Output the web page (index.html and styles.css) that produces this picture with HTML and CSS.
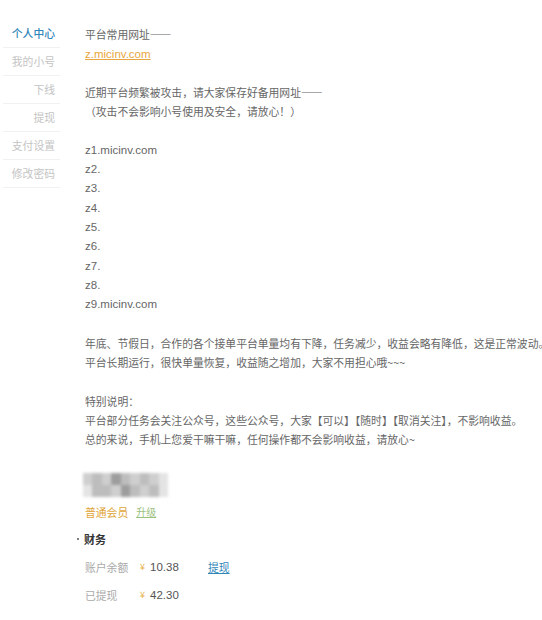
FILE: index.html
```html
<!DOCTYPE html>
<html lang="zh">
<head>
<meta charset="utf-8">
<link rel="stylesheet" href="styles.css">
</head>
<body>
<div class="page">
  <nav class="side">
    <div class="item active">个人中心</div>
    <div class="item">我的小号</div>
    <div class="item">下线</div>
    <div class="item">提现</div>
    <div class="item">支付设置</div>
    <div class="item">修改密码</div>
  </nav>
  <main class="main">
    <div class="notice">
      <p>平台常用网址——</p>
      <p><a class="link">z.micinv.com</a></p>
      <p class="blank"></p>
      <p>近期平台频繁被攻击，请大家保存好备用网址——</p>
      <p>（攻击不会影响小号使用及安全，请放心！）</p>
      <p class="blank"></p>
      <p class="url">z1.micinv.com</p>
      <p class="url">z2.</p>
      <p class="url">z3.</p>
      <p class="url">z4.</p>
      <p class="url">z5.</p>
      <p class="url">z6.</p>
      <p class="url">z7.</p>
      <p class="url">z8.</p>
      <p class="url">z9.micinv.com</p>
      <p class="blank"></p>
      <p class="nowrap">年底、节假日，合作的各个接单平台单量均有下降，任务减少，收益会略有降低，这是正常波动。</p>
      <p>平台长期运行，很快单量恢复，收益随之增加，大家不用担心哦~~~</p>
      <p class="blank"></p>
      <p>特别说明：</p>
      <p class="nowrap">平台部分任务会关注公众号，这些公众号，大家【可以】【随时】【取消关注】，不影响收益。</p>
      <p>总的来说，手机上您爱干嘛干嘛，任何操作都不会影响收益，请放心~</p>
    </div>
    <div class="profile">
      <div class="mosaic">
        <span class="c2"></span><span class="c3"></span><span class="c2"></span><span class="c4"></span><span class="c3"></span><span class="c2"></span><span class="c3"></span><span class="c2"></span><span class="c1"></span>
        <span class="c1"></span><span class="c3"></span><span class="c3"></span><span class="c2"></span><span class="c4"></span><span class="c3"></span><span class="c2"></span><span class="c3"></span><span class="c1"></span>
      </div>
      <div class="level"><span class="member">普通会员</span><a class="upgrade">升级</a></div>
    </div>
    <div class="finance">
      <div class="ftitle"><span class="dot"></span><span>财务</span></div>
      <div class="frows">
        <div class="frow"><span class="flabel">账户余额</span><span class="yen">¥</span><span class="amount">10.38</span><a class="withdraw">提现</a></div>
        <div class="frow"><span class="flabel">已提现</span><span class="yen">¥</span><span class="amount">42.30</span></div>
      </div>
    </div>
  </main>
</div>
</body>
</html>
```
FILE: styles.css
```css
html, body {
  margin: 0;
  padding: 0;
  background: #fff;
}
body {
  font-family: "Noto Sans CJK SC", "Liberation Sans", sans-serif;
  color: #666;
  width: 542px;
  height: 620px;
  overflow: hidden;
}
.page {
  display: flex;
  align-items: flex-start;
}
.side {
  width: 62px;
  flex: none;
  padding-top: 20px;
}
.item {
  height: 27px;
  line-height: 27px;
  margin: 0 2px 0 3px;
  padding-right: 5px;
  text-align: right;
  font-size: 10.8px;
  color: #c4c4c4;
  border-bottom: 1px solid #f1f1f1;
}
.item.active {
  color: #2f86b8;
  font-weight: 500;
}
.main {
  flex: 1;
  padding-left: 23px;
  padding-top: 25px;
  min-width: 0;
}
.notice p {
  margin: 0;
  font-size: 10.8px;
  line-height: 19.3px;
  height: 19.3px;
  color: #666;
}
.notice .nowrap {
  white-space: nowrap;
}
.link {
  color: #e8a640;
  text-decoration: underline;
  font-size: 11.5px;
  font-family: "Liberation Sans", sans-serif;
}
.notice .url {
  font-family: "Liberation Sans", sans-serif;
  font-size: 11.5px;
  color: #666;
}
.profile {
  padding-top: 23px;
}
.mosaic {
  width: 85px;
  height: 24px;
  display: grid;
  grid-template-columns: repeat(9, 1fr);
  grid-template-rows: repeat(2, 1fr);
  filter: blur(1.5px);
  margin-left: -2px;
}
.mosaic .c1 { background: #e4e4e4; }
.mosaic .c2 { background: #cfcfcf; }
.mosaic .c3 { background: #bdbdbd; }
.mosaic .c4 { background: #9d9d9d; }
.level {
  display: flex;
  align-items: center;
  gap: 8px;
  margin-top: 6px;
  height: 18px;
  font-size: 10.8px;
}
.member {
  color: #e2a53a;
}
.upgrade {
  color: #9bbf7d;
  text-decoration: underline;
  font-size: 10px;
}
.finance {
  margin-top: 8px;
}
.ftitle {
  display: flex;
  align-items: center;
  gap: 5px;
  margin-left: -9px;
  font-size: 11px;
  font-weight: 700;
  color: #333;
  height: 20px;
  line-height: 20px;
}
.dot {
  width: 2px;
  height: 2px;
  border-radius: 50%;
  background: #555;
  margin-left: 1px;
}
.frows {
  display: flex;
  flex-direction: column;
  margin-top: 4px;
}
.frow {
  display: flex;
  align-items: center;
  height: 28px;
  font-size: 10.8px;
}
.flabel {
  width: 55px;
  color: #aaa;
}
.yen {
  color: #e8b24a;
  font-size: 9px;
  width: 10px;
}
.amount {
  width: 58px;
  color: #555;
  font-family: "Liberation Sans", sans-serif;
  font-size: 11.5px;
}
.withdraw {
  color: #2f86b8;
  text-decoration: underline;
  font-size: 10.8px;
}
```
